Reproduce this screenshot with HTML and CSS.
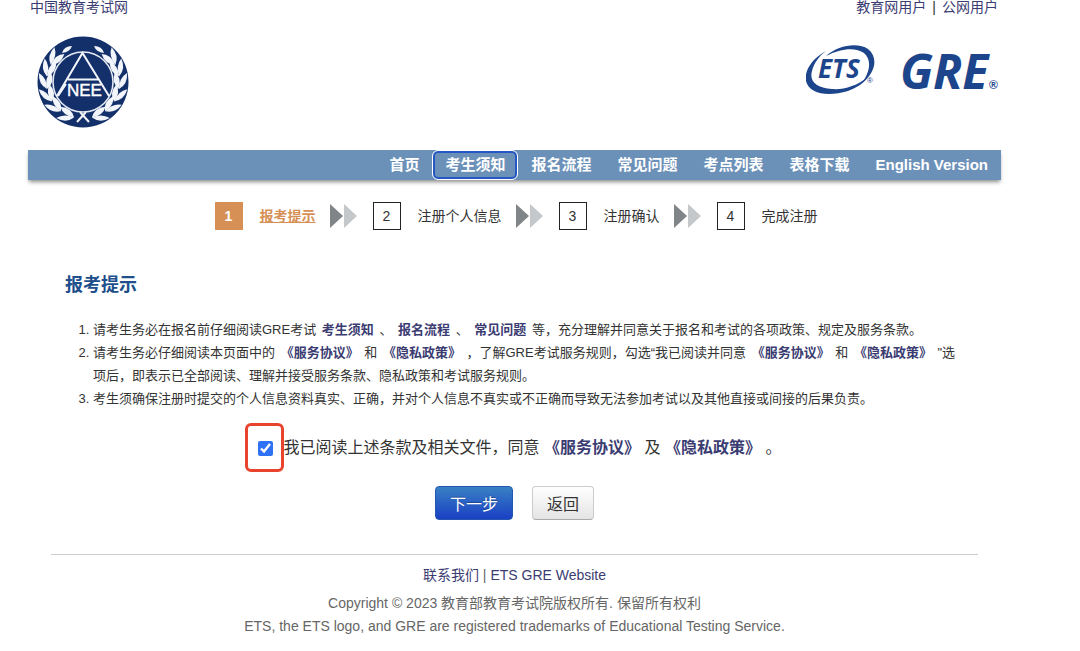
FILE: index.html
```html
<!DOCTYPE html>
<html lang="zh-CN">
<head>
  <meta charset="UTF-8">
  <meta name="viewport" content="width=device-width, initial-scale=1.0">
  <title>GRE 报考提示</title>
  <link rel="stylesheet" href="styles.css">
</head>
<body>
  <div class="wrapper">
    <div class="topbar">
      <a href="#">中国教育考试网</a>
      <div class="user-links"><a href="#">教育网用户</a><span>|</span><a href="#">公网用户</a></div>
    </div>

    <header class="header">
      <svg class="neea-logo" width="92" height="92" viewBox="0 0 92 92" role="img" aria-label="NEEA">
        <defs>
          <g id="leaves" fill="#f2f5fa">
            <path d="M10 53 Q1 48 2 37 Q10 42 10 53Z"/>
            <path d="M10 53 Q7 42 14 36 Q18 47 10 53Z"/>
          </g>
          <g id="branch">
            <use href="#leaves" transform="rotate(-65 46 46)"/>
            <use href="#leaves" transform="rotate(-42 46 46)"/>
            <use href="#leaves" transform="rotate(-21 46 46)"/>
            <use href="#leaves" transform="rotate(0 46 46)"/>
            <use href="#leaves" transform="rotate(20 46 46)"/>
            <use href="#leaves" transform="rotate(39 46 46)"/>
            <path d="M25 17 Q27 10 35 10 Q33 16 25 17Z" fill="#f2f5fa"/>
            <path d="M40 86 L49 76" stroke="#f2f5fa" stroke-width="2"/>
          </g>
        </defs>
        <circle cx="46" cy="46" r="45.5" fill="#14306b"/>
        <use href="#branch"/>
        <use href="#branch" transform="translate(92 0) scale(-1 1)"/>
        <circle cx="46" cy="46" r="30" fill="#14306b" stroke="#e4e9f2" stroke-width="1.6"/>
        <path d="M20 60 L45.500 17 L72 60 M31 43.500 H61 M21 60 L29 48" fill="none" stroke="#f2f5fa" stroke-width="2"/>
        <text x="30" y="60" class="neea-text">NEE</text>
      </svg>
      <div class="brand">
        <svg width="70" height="59" viewBox="0 -8 70 59" role="img" aria-label="ETS">
          <path d="M20 7 C5 15 -2 28 0 37 C3 50 22 53 42 47 C50 44 57 40 62 33 C51 42 37 46 26 45 C10 44 3 37 6 27 C8 19 13 12 20 7Z" fill="#1c458c"/>
          <path d="M20 12 C32 1 52 -2 62 5 C73 14 69 29 56 39 C64 28 66 16 58 9 C50 3 35 4 20 12Z" fill="#1c458c"/>
          <text x="12" y="34" class="ets-text">ETS</text>
          <text x="61" y="39" class="reg-mark">®</text>
        </svg>
        <svg width="99" height="72" viewBox="0 0 99 72" role="img" aria-label="GRE">
          <text x="0" y="53" class="gre-text">GRE</text>
          <text x="89" y="53" class="reg-mark-large">®</text>
        </svg>
      </div>
    </header>

    <nav class="nav">
      <a href="#">首页</a>
      <a href="#" class="focused">考生须知</a>
      <a href="#">报名流程</a>
      <a href="#">常见问题</a>
      <a href="#">考点列表</a>
      <a href="#">表格下载</a>
      <a href="#">English Version</a>
    </nav>

    <div class="steps">
      <span class="step-number active">1</span><a href="#" class="step-name active">报考提示</a>
      <svg class="arrows" width="27" height="26" viewBox="0 0 27 26"><path d="M0 1L13 13L0 25Z" fill="#808587"/><path d="M14 1L27 13L14 25Z" fill="#c4c8cb"/></svg>
      <span class="step-number">2</span><span class="step-name">注册个人信息</span>
      <svg class="arrows" width="27" height="26" viewBox="0 0 27 26"><path d="M0 1L13 13L0 25Z" fill="#808587"/><path d="M14 1L27 13L14 25Z" fill="#c4c8cb"/></svg>
      <span class="step-number">3</span><span class="step-name">注册确认</span>
      <svg class="arrows" width="27" height="26" viewBox="0 0 27 26"><path d="M0 1L13 13L0 25Z" fill="#808587"/><path d="M14 1L27 13L14 25Z" fill="#c4c8cb"/></svg>
      <span class="step-number">4</span><span class="step-name">完成注册</span>
    </div>

    <main class="content">
      <h1>报考提示</h1>
      <ol class="notice">
        <li>请考生务必在报名前仔细阅读GRE考试 <a href="#">考生须知</a> 、 <a href="#">报名流程</a> 、 <a href="#">常见问题</a> 等，充分理解并同意关于报名和考试的各项政策、规定及服务条款。</li>
        <li>请考生务必仔细阅读本页面中的 <a href="#">《服务协议》</a> 和 <a href="#">《隐私政策》</a> ，了解GRE考试服务规则，勾选“我已阅读并同意 <a href="#">《服务协议》</a> 和 <a href="#">《隐私政策》</a> "选项后，即表示已全部阅读、理解并接受服务条款、隐私政策和考试服务规则。</li>
        <li>考生须确保注册时提交的个人信息资料真实、正确，并对个人信息不真实或不正确而导致无法参加考试以及其他直接或间接的后果负责。</li>
      </ol>

      <form>
        <div class="agree">
          <span class="check-frame"><input type="checkbox" id="agree" checked></span>
          <label for="agree">我已阅读上述条款及相关文件，同意 <a href="#">《服务协议》</a> 及 <a href="#">《隐私政策》</a> 。</label>
        </div>
        <div class="buttons">
          <button type="submit" class="btn primary">下一步</button>
          <button type="button" class="btn">返回</button>
        </div>
      </form>
    </main>

    <footer class="footer">
      <p class="footer-links"><a href="#">联系我们</a> | <a href="#">ETS GRE Website</a></p>
      <p>Copyright © 2023 教育部教育考试院版权所有. 保留所有权利</p>
      <p>ETS, the ETS logo, and GRE are registered trademarks of Educational Testing Service.</p>
    </footer>
  </div>
</body>
</html>
```
FILE: styles.css
```css
body {
  margin: 0;
  background: #fff;
  color: #333;
  font-family: "Liberation Sans", Arial, "Noto Sans CJK SC", sans-serif;
  font-size: 14px;
  line-height: 23px;
}
a {
  color: #3b3c72;
  text-decoration: none;
}
.wrapper {
  margin: 0 79px 0 28px;
}
.topbar {
  display: flex;
  justify-content: space-between;
  padding: 0 3px 0 2px;
  line-height: 14px;
}
.user-links span {
  margin: 0 6px;
}
.header {
  display: flex;
  justify-content: space-between;
  padding: 22px 2px 22px 9px;
}
.brand {
  display: flex;
  align-items: flex-start;
  gap: 24px;
}
.neea-text {
  font: 17px "Liberation Sans", sans-serif;
  fill: #fff;
  stroke: #fff;
  stroke-width: 0.4;
}
.ets-text {
  font: italic bold 26px "Open Sans", sans-serif;
  fill: #1c458c;
}
.gre-text {
  font: italic bold 48px "Open Sans", sans-serif;
  fill: #1c458c;
}
.reg-mark {
  font: 8px "Liberation Sans", sans-serif;
  fill: #1c458c;
}
.reg-mark-large {
  font: bold 12px "Liberation Sans", sans-serif;
  fill: #1c458c;
}
.nav {
  display: flex;
  justify-content: flex-end;
  align-items: center;
  height: 30px;
  background: #6c91b8;
  box-shadow: 0 3px 4px -1px rgba(0, 0, 0, 0.45);
}
.nav a {
  padding: 0 11px;
  border: 2px solid transparent;
  border-radius: 5px;
  color: #fff;
  font-size: 15px;
  font-weight: bold;
  line-height: 24px;
}
.nav a.focused {
  margin: 0 1px;
  padding: 0 10px;
  border: 2px solid #2457c5;
  outline: 1px solid #fff;
}
.steps {
  display: flex;
  justify-content: center;
  align-items: center;
  padding: 22px 0 0 3px;
}
.step-number {
  box-sizing: border-box;
  width: 28px;
  border: 1px solid #222;
  line-height: 26px;
  text-align: center;
}
.step-number.active {
  border-color: #d69055;
  background: #d69055;
  color: #fff;
  font-weight: bold;
}
.step-name {
  margin: 0 14px 0 17px;
}
.step-name:last-child {
  margin-right: 0;
}
.step-name.active {
  color: #d69055;
  font-weight: bold;
  text-decoration: underline;
}
.arrows {
  margin-right: 16px;
}
.content {
  padding: 43px 5px 0 37px;
}
h1 {
  margin: 0;
  color: #204f8c;
  font-size: 18px;
  line-height: 24px;
}
.notice {
  margin: 21px 0 0;
  padding: 0 33px 0 28px;
  font-size: 13px;
}
.notice a, .agree a {
  font-weight: bold;
}
.notice a {
  margin: 0 2px;
}
.agree {
  display: flex;
  justify-content: center;
  align-items: center;
  margin-top: 13px;
  padding-right: 35px;
  font-size: 16px;
}
.check-frame {
  display: flex;
  align-items: center;
  justify-content: center;
  box-sizing: border-box;
  width: 39px;
  height: 49px;
  border: 3px solid #e8432d;
  border-radius: 6px;
}
.check-frame input {
  width: 15px;
  height: 15px;
  margin: 2px 0 0 2px;
  accent-color: #2f72f6;
}
.buttons {
  display: flex;
  justify-content: center;
  gap: 19px;
  margin-top: 14px;
  padding-right: 32px;
}
.btn {
  height: 34px;
  padding: 0 14px;
  border: 1px solid #ccc;
  border-bottom-color: #aaa;
  border-radius: 4px;
  background: linear-gradient(#fff, #e4e4e4);
  color: #333;
  font-family: inherit;
  font-size: 16px;
  cursor: pointer;
}
.btn.primary {
  border-color: #2458b0;
  background: linear-gradient(#3980c4, #1a40c4);
  color: #fff;
  text-shadow: 0 -1px 0 rgba(0, 0, 0, 0.25);
}
.footer {
  margin: 34px 23px 0;
  padding-top: 9px;
  border-top: 1px solid #ccc;
  color: #666;
  text-align: center;
}
.footer p {
  margin: 0;
}
.footer .footer-links {
  margin-bottom: 5px;
}
```
